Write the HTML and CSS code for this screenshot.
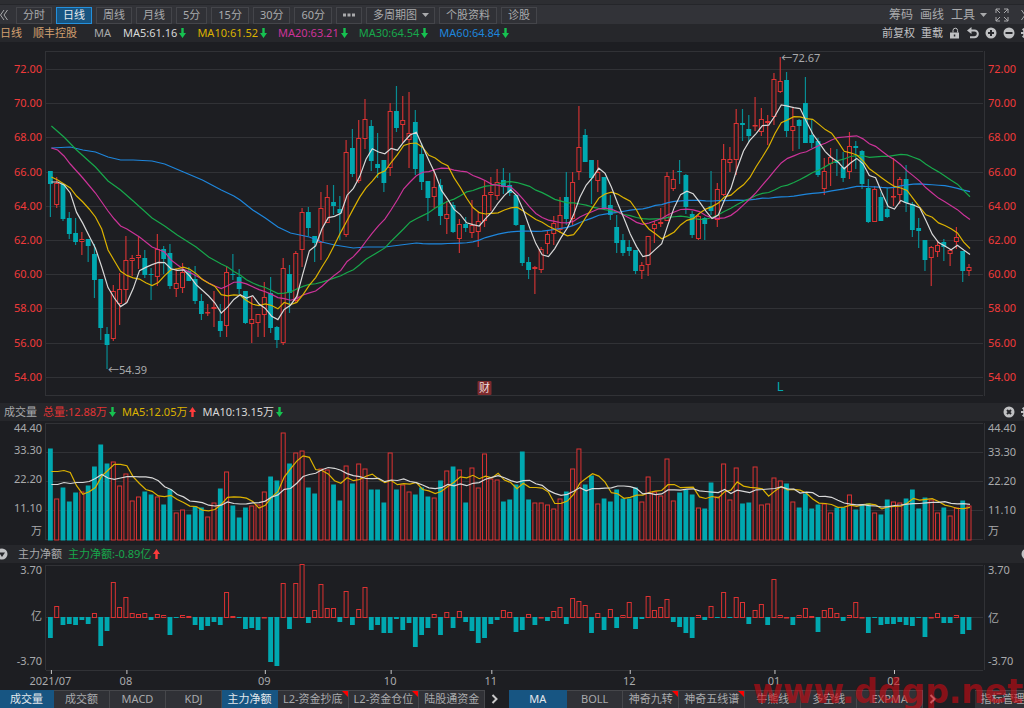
FILE: index.html
```html
<!DOCTYPE html>
<html lang="zh-CN">
<head>
  <meta charset="UTF-8">
  <meta name="viewport" content="width=device-width, initial-scale=1.0">
  <title>顺丰控股 - 日线</title>
  <link rel="stylesheet" href="styles.css">
</head>
<body>
  <svg class="symbols" aria-hidden="true">
    <symbol id="down" viewBox="0 0 7 10"><path d="M2.300 0h2.400v5H7L3.500 10 0 5h2.300z"/></symbol>
    <symbol id="up" viewBox="0 0 7 10"><path d="M2.300 10h2.400V5H7L3.500 0 0 5h2.300z"/></symbol>
    <symbol id="gear" viewBox="0 0 12 12"><path fill-rule="evenodd" d="M5 0h2v2l1.500.6L10 1.200 11 2.500 9.600 4l.4 1h2v2h-2l-.4 1 1.400 1.500L9.500 11 8 9.500 7 10v2H5v-2l-1-.5L2.500 11 1 9.500 2.400 8 2 7H0V5h2l.4-1L1 2.500 2.500 1 4 2.400 5 2zM6 4a2 2 0 100 4 2 2 0 000-4z"/></symbol>
    <symbol id="next" viewBox="0 0 8 10"><path d="M1.500 1l4 4-4 4" fill="none" stroke="currentColor" stroke-width="2"/></symbol>
  </svg>

  <header class="toolbar">
    <button class="back" aria-label="收起"><svg width="8" height="12" viewBox="0 0 8 12"><path d="M4 1L.500 6 4 11M7.500 1L4 6l3.500 5" class="line"/></svg></button>
    <nav class="periods">
      <button>分时</button>
      <button class="active">日线</button>
      <button>周线</button>
      <button>月线</button>
      <button>5分</button>
      <button>15分</button>
      <button>30分</button>
      <button>60分</button>
      <button aria-label="更多"><svg width="12" height="4" viewBox="0 0 12 4"><path d="M0 .5h3v3H0zM4.500.5h3v3h-3zM9 .5h3v3H9z"/></svg></button>
      <button>多周期图<svg class="caret" width="7" height="4" viewBox="0 0 7 4"><path d="M0 0h7L3.500 4z"/></svg></button>
      <button>个股资料</button>
      <button>诊股</button>
    </nav>
    <div class="tools">
      <button>筹码</button>
      <button>画线</button>
      <button>工具<svg class="caret" width="7" height="4" viewBox="0 0 7 4"><path d="M0 0h7L3.500 4z"/></svg></button>
      <button class="expand" aria-label="全屏"><svg width="14" height="14" viewBox="0 0 14 14"><path d="M1 5V1h4M1 1l4 4M9 1h4v4M13 1L9 5M1 9v4h4M1 13l4-4M13 9v4H9M13 13L9 9" class="line"/></svg></button>
      <button aria-label="展开"><svg width="8" height="12" viewBox="0 0 8 12"><path d="M.500 1L4 6 .500 11M4 1l3.500 5L4 11" class="line"/></svg></button>
    </div>
  </header>

  <div class="bar quote">
    <span class="stock">日线</span>
    <span class="stock name">顺丰控股</span>
    <span class="label">MA</span>
    <span class="item white">MA5:61.16<svg class="arrow down"><use href="#down"/></svg></span>
    <span class="item yellow">MA10:61.52<svg class="arrow down"><use href="#down"/></svg></span>
    <span class="item pink">MA20:63.21<svg class="arrow down"><use href="#down"/></svg></span>
    <span class="item green">MA30:64.54<svg class="arrow down"><use href="#down"/></svg></span>
    <span class="item blue">MA60:64.84<svg class="arrow down"><use href="#down"/></svg></span>
    <div class="icons">
      <button>前复权</button>
      <button>重载</button>
      <button aria-label="锁定"><svg width="12" height="12" viewBox="0 0 12 12"><path fill-rule="evenodd" d="M1 5.500h9v6H1zM4.800 7.500v2h1.500v-2z"/><path d="M4 5.500V3.500a2.300 2.300 0 014.600 0v2" class="line"/></svg></button>
      <button aria-label="撤销"><svg width="12" height="12" viewBox="0 0 12 12"><path d="M3 3.500h4.500a3.300 3.300 0 010 6.700H3" class="thick"/><path d="M4.500 0v7L0 3.500z"/></svg></button>
      <button aria-label="放大"><svg width="12" height="12" viewBox="0 0 12 12"><circle cx="6" cy="6" r="5.500"/><path d="M6 3v6M3 6h6" class="cut"/></svg></button>
      <button aria-label="缩小"><svg width="12" height="12" viewBox="0 0 12 12"><circle cx="6" cy="6" r="5.500"/><path d="M2.500 6h7" class="cut"/></svg></button>
      <button aria-label="设置"><svg width="12" height="12"><use href="#gear"/></svg></button>
    </div>
  </div>
  <svg id="price" class="chart price"></svg>

  <div class="bar">
    <span class="label">成交量</span>
    <span class="item red">总量:12.88万<svg class="arrow down"><use href="#down"/></svg></span>
    <span class="item yellow">MA5:12.05万<svg class="arrow up"><use href="#up"/></svg></span>
    <span class="item white">MA10:13.15万<svg class="arrow down"><use href="#down"/></svg></span>
    <div class="icons">
      <button aria-label="关闭"><svg width="12" height="12" viewBox="0 0 12 12"><circle cx="6" cy="6" r="5.500"/><path d="M4 4l4 4M8 4L4 8" class="cut"/></svg></button>
      <button aria-label="设置"><svg width="12" height="12"><use href="#gear"/></svg></button>
    </div>
  </div>
  <svg id="volume" class="chart volume"></svg>

  <div class="bar flow-bar">
    <button class="fold" aria-label="折叠"><svg width="12" height="12" viewBox="0 0 12 12"><circle cx="6" cy="6" r="5.500"/><path d="M3 4.500h6L6 9z" class="hole"/></svg></button>
    <span class="label">主力净额</span>
    <span class="item green">主力净额:-0.89亿<svg class="arrow up"><use href="#up"/></svg></span>
    <div class="icons">
      <button aria-label="关闭"><svg width="12" height="12" viewBox="0 0 12 12"><circle cx="6" cy="6" r="5.500"/></svg></button>
    </div>
  </div>
  <svg id="flow" class="chart flow"></svg>

  <footer class="tabs">
    <button class="active first">成交量</button>
    <button>成交额</button>
    <button>MACD</button>
    <button>KDJ</button>
    <button class="active">主力净额</button>
    <button class="hot">L2-资金抄底</button>
    <button class="hot">L2-资金仓位</button>
    <button>陆股通资金</button>
    <button class="more" aria-label="更多"><svg width="8" height="10"><use href="#next"/></svg></button>
    <button class="active main">MA</button>
    <button>BOLL</button>
    <button class="hot">神奇九转</button>
    <button class="hot">神奇五线谱</button>
    <button>牛熊线</button>
    <button>多空线</button>
    <button class="wide">EXPMA</button>
    <button class="more" aria-label="更多"><svg width="8" height="10"><use href="#next"/></svg></button>
    <button class="manage">指标管理</button>
    <div class="watermark">www.ddgp.net</div>
  </footer>

  <script src="chart.js"></script>
</body>
</html>
```

FILE: styles.css
```css
* { box-sizing: border-box; }
body {
  margin: 0;
  min-height: 100vh;
  display: flex;
  flex-direction: column;
  overflow-x: hidden;
  background: #1d1e22;
  color: #a9aaac;
  font-family: "Noto Sans", "Noto Sans CJK SC", sans-serif;
  font-size: 11px;
  line-height: 16px;
}
button {
  padding: 0;
  border: 0;
  background: none;
  color: inherit;
  font: inherit;
  white-space: nowrap;
  display: flex;
  align-items: center;
  justify-content: center;
}
svg { fill: currentColor; flex: none; }
.symbols { position: absolute; width: 0; height: 0; }
.line { fill: none; stroke: currentColor; stroke-width: 1; }
.thick { fill: none; stroke: currentColor; stroke-width: 2; }
.cut { fill: none; stroke: #26272b; stroke-width: 2; }
.hole { fill: #26272b; }

/* top toolbar */
.toolbar {
  height: 24px;
  padding-top: 6px;
  display: flex;
  align-items: center;
  background: linear-gradient(#2d2e32 4px, #25262a 4px, #25262a 5px, #323338 5px);
  overflow: hidden;
}
.back { width: 16px; justify-content: flex-start; }
.periods { display: flex; gap: 4px; }
.periods button {
  height: 17px;
  padding: 0 6px;
  border: 1px solid #44454a;
  background: #303136;
}
.periods .active { background: #175582; border-color: #2390dd; color: #e4e8ec; }
.caret { margin: 0 -1px 0 5px; }
.tools {
  margin: 0 -5px 0 auto;
  display: flex;
  gap: 7px;
  font-size: 12px;
}
.expand { margin: 0 5px 0 2px; }

/* headings of the three panes */
.bar {
  height: 18px;
  padding-left: 4px;
  display: flex;
  align-items: center;
  background: #26272b;
  overflow: hidden;
  white-space: nowrap;
}
.quote { padding-left: 0; }
.stock { color: #d3a070; }
.name { margin: 0 17px 0 11px; }
.label { margin-right: 6px; }
.quote .label { margin-right: 12px; }
.item { margin-right: 6px; display: flex; align-items: center; }
.quote .item { margin-right: 11px; }
.arrow { width: 7px; height: 10px; margin-left: 2px; }
.arrow.down { color: #16c250; }
.arrow.up { color: #ff3b3b; }
.white { color: #d8d8d8; }
.yellow { color: #dcb200; }
.pink { color: #cc3399; }
.green { color: #17a84b; }
.blue { color: #1e86dc; }
.red { color: #e03434; }
.icons { margin: 0 -9px 0 auto; display: flex; gap: 6px; color: #c0c1c3; }
.flow-bar { padding-left: 0; }
.fold { margin: 0 10px 0 -4px; color: #c0c1c3; }

/* charts */
.chart { display: block; width: 100%; }
.price { height: 361px; }
.volume { height: 124px; }
.flow { height: 127px; }
.chart text { dominant-baseline: central; fill: #a9aaac; }
.chart .price-label { fill: #f03a3a; }
.chart .end { text-anchor: end; }
.chart .middle { text-anchor: middle; }
.grid { stroke: #313236; stroke-width: 1; shape-rendering: crispEdges; }
.tick { stroke: #c8c8c8; stroke-width: 1; }
.rise { fill: #1d1e22; stroke: #dc3232; stroke-width: 1; }
.fall { fill: #00a8b0; stroke: none; }
.wick-rise { stroke: #cc3232; stroke-width: 1.2px; }
.wick-fall { stroke: #078c93; stroke-width: 1.2px; }
.ma { fill: none; stroke: currentColor; stroke-width: 1.2px; }
.badge { fill: #7c2a2d; }
.chart .badge-text { fill: #f0dcdc; text-anchor: middle; }
.chart .mark { fill: #00a8b0; font-size: 13px; text-anchor: middle; }

/* indicator tabs */
.tabs {
  position: relative;
  height: 18px;
  display: flex;
  align-items: stretch;
}
.tabs button {
  position: relative;
  flex: none;
  min-width: 56px;
  padding: 0 5px 2px;
  border-right: 1px solid #46474b;
  border-top: 1px solid #46474b;
  background: #303136;
}
.tabs .active { background: #175582; color: #e4e8ec; border-color: #175582; }
.tabs .first { min-width: 54px; }
.tabs .main { min-width: 58px; }
.tabs .hot::after {
  content: "";
  position: absolute;
  top: 0;
  right: 0;
  border: solid transparent;
  border-width: 0 6px 6px 0;
  border-right-color: #ff0000;
}
.tabs .wide { min-width: 66px; }
.tabs .more { min-width: 24px; padding: 0 8px 0 4px; border: 0; background: none; color: #c8c8c8; }
.tabs .manage { margin-left: auto; margin-right: -7px; }
.watermark {
  position: absolute;
  right: 1px;
  bottom: -3px;
  color: #cc0a12;
  opacity: .6;
  font: bold 33px/38px "DejaVu Sans", sans-serif;
  pointer-events: none;
}
```

FILE: chart.js
```javascript
// direction, high, body top, body bottom, low
const candles = `
d 171 171 184 217,u 177 183 205 208,d 183 184 219 221,d 212 218 234 239,d 218 233 242 245
u 232 239 242 255,d 239 239 246 262,d 244 254 280 298,d 279 279 328 340,d 327 334 345 369
u 285 291 339 341,u 273 289 304 325,u 236 260 290 303,u 255 258 261 276,u 237 255 258 269
d 250 258 275 278,d 268 274 275 300,u 234 249 277 286,d 246 249 259 274,d 244 253 286 289
u 268 283 289 297,u 263 272 288 293,d 267 271 281 281,d 266 279 301 304,d 294 301 314 320
u 304 312 313 316,u 291 307 309 327,d 304 321 331 337,u 266 272 326 337,d 254 274 275 280
d 269 277 289 294,d 291 291 323 324,u 296 319 324 343,u 314 314 323 337,u 282 297 315 337
d 277 293 328 333,d 326 327 340 348,u 258 268 343 345,d 265 274 293 313,u 251 253 301 303
u 208 212 250 267,d 207 212 228 236,d 236 236 243 262,u 192 208 243 260,u 185 197 223 223
d 185 202 206 215,d 196 209 213 240,u 140 152 235 237,d 129 148 174 177,u 120 138 181 183
u 99 119 139 149,d 120 126 161 171,d 133 164 168 178,d 160 160 183 192,u 103 111 168 176
d 86 111 128 132,u 96 120 125 143,u 92 133 140 168,d 110 122 169 175,d 143 154 182 190
d 181 181 198 221,u 169 187 197 208,d 179 185 216 225,u 201 214 219 234,d 202 205 232 233
u 219 224 239 253,d 217 224 228 232,u 200 225 233 238,u 211 221 232 247,u 181 195 221 227
u 177 192 195 211,u 169 182 196 200,d 168 180 187 194,d 173 185 193 196,d 195 195 225 226
d 225 225 263 266,d 257 262 270 279,u 266 267 269 294,u 247 249 270 273,u 230 234 244 254
u 216 223 234 245,u 197 215 230 233,d 172 197 219 225,u 172 182 219 226,u 106 147 172 180
d 129 135 162 162,d 160 160 178 204,u 160 172 181 192,d 177 177 208 208,d 195 205 215 220
d 215 227 243 253,d 234 240 253 256,d 240 247 251 256,d 250 250 271 274,u 262 265 271 279
u 236 236 265 276,u 221 224 229 243,u 208 222 224 227,u 172 176 221 221,u 170 179 189 191
d 160 171 172 184,d 174 175 207 214,d 211 214 235 238,u 215 216 239 240,d 217 218 224 240
d 171 206 211 215,u 183 189 220 227,u 144 159 195 196,u 147 159 163 172,u 109 123 160 175
d 109 123 125 141,d 115 129 136 142,u 97 125 126 131,u 108 119 132 136,u 115 121 123 145
u 73 79 117 125,u 57 81 92 93,d 72 80 131 137,u 107 126 131 151,d 119 120 126 149
d 77 103 143 143,d 119 135 143 148,d 138 141 175 177,u 158 171 189 195,u 148 157 164 186
d 149 162 163 176,d 152 167 178 182,u 132 146 172 179,d 141 146 148 169,d 150 151 184 189
d 179 188 222 223,u 186 189 222 222,d 192 197 221 221,d 188 209 217 218,u 158 196 197 206
u 177 179 195 204,d 165 179 203 212,d 202 204 230 237,d 218 228 231 248,d 240 240 260 271
u 246 247 258 286,u 241 245 252 257,d 239 242 247 261,u 249 250 254 266,u 227 237 242 249
d 251 251 271 282,u 264 267 271 276`.trim().split(/[\n,]/).map(row => {
  const [dir, ...v] = row.split(' ');
  const [high, top, bottom, low] = v.map(Number);
  return { up: dir === 'u', high, top, bottom, low, close: dir === 'u' ? top : bottom };
});

const volumes = [
  92,42,53,39,48,49,55,74,96,77,79,55,67,40,44,49,46,44,36,51,
  28,31,26,34,33,24,38,52,69,35,23,33,35,36,49,64,60,108,77,88,
  90,53,47,72,71,56,40,75,57,77,72,51,51,38,88,51,56,49,46,53,
  44,43,60,70,74,71,38,73,53,87,62,61,39,41,56,89,41,38,38,36,
  32,42,49,72,92,56,65,37,42,39,51,42,42,53,39,64,49,45,82,40,
  48,51,46,33,32,58,44,77,41,73,37,38,74,36,37,63,60,57,39,33,
  47,32,36,37,28,33,33,46,31,36,37,28,26,41,39,38,42,51,32,43,
  41,28,33,25,33,40,35];

const flows = [
  -21,11,-8,-7,-8,-3,-7,4,-29,-14,35,10,20,4,3,4,-3,3,2,-18,
  -1,2,1,-8,-13,-9,-5,-8,25,1,-1,-12,-11,-13,0,-45,-49,34,-12,34,
  53,-6,7,33,9,9,-5,26,-8,8,30,-13,-8,-16,-16,-2,-13,-6,-30,-18,
  -11,3,-18,5,-11,6,-5,-14,-26,-21,-7,-3,7,5,-15,-13,3,-8,0,-4,
  6,10,-7,19,16,12,-16,4,-13,8,-11,2,15,-12,-2,21,7,10,18,-5,
  -10,-16,-21,2,-3,11,-1,25,-1,20,15,-7,7,13,-8,38,2,0,-8,2,
  9,1,-15,7,9,4,-4,2,15,0,-16,-1,-8,-7,-7,-5,-8,-9,-1,-20,
  0,4,-6,-6,2,-17,-13];

// the first points of each average come from days before the visible range
const averages = [
  { n: 60, color: 'blue', start: [[0,148],[3,147],[5,150],[7,152],[9,157],[11,160],[13,160],[16,161],[18,164],[21,172],[24,180],[27,190],[29,196],[30,200],[32,210],[34,218],[36,227],[38,233],[41,237],[43,242],[45,245],[48,248],[50,247],[53,247],[58,243]] },
  { n: 30, color: 'green', start: [[0,126],[2,137],[4,150],[7,167],[9,181],[11,190],[13,201],[16,218],[18,226],[20,235],[23,247],[25,257],[27,264],[28,267]] },
  { n: 20, color: 'pink', start: [[0,148],[1,150],[2,156],[3,164],[4,171],[5,178],[7,193],[9,211],[10,219],[11,226],[12,229],[14,237],[16,247],[18,252]] },
  { n: 10, color: 'yellow', start: [[0,177],[1,180],[2,184],[3,188],[4,196],[5,202],[6,209],[7,217],[8,229]] },
  { n: 5, color: 'white', start: [[0,182],[1,182],[2,185],[3,193]] }
];

function average(values, n, start) {
  const points = start.slice();
  for (let i = n - 1; i < values.length; i++) {
    let sum = 0;
    for (let k = i - n + 1; k <= i; k++) sum += values[k];
    points.push([i, sum / n]);
  }
  return points;
}

const line = (x1, y1, x2, y2, cls) => `<line x1="${x1}" y1="${y1}" x2="${x2}" y2="${y2}" class="${cls}"/>`;
const text = (x, y, str, cls) => `<text x="${x}" y="${y}" class="${cls || ''}">${str}</text>`;
const bar = (x, y, h, up) => up
  ? `<rect x="${x - 2}" y="${y + 0.5}" width="4" height="${Math.max(h - 1, 0.5)}" class="rise"/>`
  : `<rect x="${x - 2.4}" y="${y}" width="4.8" height="${Math.max(h, 1)}" class="fall"/>`;

function draw() {
  const width = document.body.clientWidth;
  const left = 45.5;
  const right = width - 39.5;
  const step = (width - 105.4) / 146;
  const px = i => 50.4 + i * step;
  const path = (points, color, y) =>
    `<polyline class="ma ${color}" points="${points.map(p => (px(p[0]) + 1) + ',' + y(p[1])).join(' ')}"/>`;
  const show = (id, top, height, html) => {
    const svg = document.getElementById(id);
    svg.setAttribute('viewBox', `0 ${top} ${width} ${height}`);
    svg.innerHTML = html;
  };

  // price, y runs from 42 to 403
  let out = line(left, 51, left, 396, 'grid') + line(right, 51, right, 396, 'grid');
  out += line(left, 51.5, right - 2, 51.5, 'grid') + line(left, 395.5, right - 2, 395.5, 'grid');
  for (let p = 72; p >= 54; p -= 2) {
    const y = 69.5 + (72 - p) * 17.1;
    out += line(left, y, right - 2, y, 'grid');
    out += text(42, y - 1, p.toFixed(2), 'price-label end') + text(width - 36, y - 1, p.toFixed(2), 'price-label');
  }
  candles.forEach((c, i) => {
    out += line(px(i), c.high, px(i), c.low, c.up ? 'wick-rise' : 'wick-fall');
    out += bar(px(i), c.top, c.bottom - c.top, c.up);
  });
  const closes = candles.map(c => c.close);
  averages.forEach(a => { out += path(average(closes, a.n, a.start), a.color, v => v); });
  out += text(px(9) + 1, 369, '←54.39') + text(px(116) + 1, 57, '←72.67');
  out += `<rect x="${px(69) - 7}" y="381" width="14" height="14" rx="1" class="badge"/>` + text(px(69), 387, '财', 'badge-text');
  out += text(px(116), 386, 'L', 'mark');
  show('price', 42, 361, out);

  // volume
  out = line(left, 2, left, 119, 'grid') + line(right, 2, right, 119, 'grid');
  [2.5, 31.5, 60.5, 89.5, 118.5].forEach(y => { out += line(left, y, right - 2, y, 'grid'); });
  [['44.40', 6, 6], ['33.30', 28, 30], ['22.20', 57, 59], ['11.10', 86, 88], ['万', 109, 109]].forEach(([str, a, b]) => {
    out += text(42, a, str, 'end') + text(width - 36, b, str);
  });
  volumes.forEach((v, i) => { out += bar(px(i), 119.5 - v, v, candles[i].up); });
  out += path(average(volumes, 5, [[0,69],[1,69],[2,70],[3,68]]), 'yellow', v => 119.5 - v);
  out += path(average(volumes, 10, [[0,56],[1,56],[2,58],[3,57],[4,58],[5,58],[6,59],[7,62],[8,66]]), 'white', v => 119.5 - v);
  show('volume', 0, 124, out);

  // net flow
  out = line(left, 2, left, 107, 'grid') + line(right, 2, right, 107, 'grid');
  [2.5, 54.5, 107.5].forEach(y => { out += line(left, y, right - 2, y, 'grid'); });
  [['3.70', 6, 6], ['亿', 52, 54], ['-3.70', 97, 97]].forEach(([str, a, b]) => {
    out += text(42, a, str, 'end') + text(width - 36, b, str);
  });
  flows.forEach((v, i) => { out += bar(px(i), v >= 0 ? 54 - v : 54, Math.abs(v) + (v >= 0 ? 1 : 0), v >= 0); });
  [[0, '2021/07'], [12, '08'], [34, '09'], [54, '10'], [70, '11'], [92, '12'], [115, '01'], [134, '02']].forEach(([i, str]) => {
    out += line(px(i) + 1, 107, px(i) + 1, 111, 'tick') + text(px(i), 117, str, 'middle');
  });
  show('flow', 0, 127, out);
}

draw();
window.addEventListener('resize', draw);
```
